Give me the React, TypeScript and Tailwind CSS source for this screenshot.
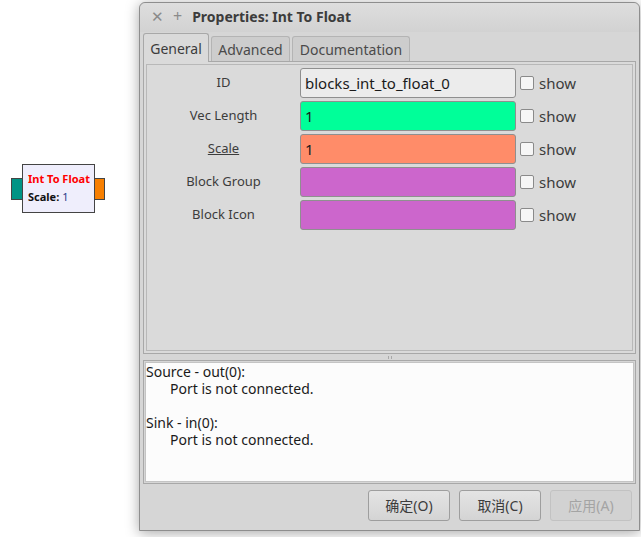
import React from 'react';

type Param = {
  label: string;
  value: string;
  bg: string;
  underline?: boolean;
};

const params: Param[] = [
  { label: 'ID', value: 'blocks_int_to_float_0', bg: 'bg-[#ececec]' },
  { label: 'Vec Length', value: '1', bg: 'bg-[#00ff99]' },
  { label: 'Scale', value: '1', bg: 'bg-[#ff8c69]', underline: true },
  { label: 'Block Group', value: '', bg: 'bg-[#cc66cc]' },
  { label: 'Block Icon', value: '', bg: 'bg-[#cc66cc]' },
];

const FlowBlock: React.FC = () => (
  <div className="absolute left-[11px] top-[164px] flex items-center">
    <div className="w-[11px] h-[22px] bg-[#009485] border border-[#444] border-r-0" />
    <div className="w-[73px] h-[49px] bg-[#efeefc] border border-[#444] pl-[5px] pt-[5px] text-[11px] leading-[18px] font-bold whitespace-nowrap">
      <div className="text-[#ff0000]">Int To Float</div>
      <div className="text-[#111]">
        Scale: <span className="font-normal text-[#1f3a8a]">1</span>
      </div>
    </div>
    <div className="w-[10px] h-[22px] bg-[#f77f00] border border-[#444] border-l-0" />
  </div>
);

const Tab: React.FC<{ label: string; active?: boolean; width: string }> = ({ label, active, width }) =>
  active ? (
    <div className={`${width} h-[29px] -mb-px z-10 rounded-t-[3px] border border-b-0 border-[#a8a8a8] bg-[#dadada] flex items-center justify-center text-[#3c3c3c]`}>
      {label}
    </div>
  ) : (
    <div className={`${width} h-[25px] rounded-t-[3px] border border-b-0 border-[#b4b4b4] bg-[#cdcdcd] flex items-center justify-center text-[#4a4a4a]`}>
      {label}
    </div>
  );

const ParamRow: React.FC<{ p: Param }> = ({ p }) => (
  <div className="flex items-center h-[30px]">
    <div className="w-[153px] text-center text-[13px] text-[#3c3c3c]">
      <span className={p.underline ? 'underline' : ''}>{p.label}</span>
    </div>
    <div className={`w-[216px] h-[30px] rounded-[3px] border border-[#8f8f8f] ${p.bg} px-[4px] flex items-center text-[15px] text-[#1a1a1a]`}>
      {p.value}
    </div>
    <div className="ml-[4px] w-[14px] h-[14px] rounded-[2px] border border-[#8a8a8a] bg-[#f6f6f6]" />
    <span className="ml-[5px] text-[15px] text-[#3c3c3c]">show</span>
  </div>
);

const Button: React.FC<{ label: string; disabled?: boolean }> = ({ label, disabled }) => (
  <div
    className={`w-[82px] h-[31px] rounded-[3px] border flex items-center justify-center text-[14px] ${
      disabled
        ? 'border-[#c2c2c2] bg-[#d2d2d2] text-[#a4a4a4]'
        : 'border-[#9e9e9e] bg-gradient-to-b from-[#e4e4e4] to-[#d4d4d4] text-[#3c3c3c]'
    }`}
  >
    {label}
  </div>
);

export default function App() {
  return (
    <div
      className="relative w-[641px] h-[537px] bg-white overflow-hidden"
      style={{ fontFamily: '"Noto Sans", "Noto Sans CJK SC", sans-serif' }}
    >
      <FlowBlock />

      <div className="absolute left-[139px] top-[2px] w-[501px] h-[529px] rounded-t-[6px] border border-[#8e8e8e] bg-[#d6d6d6] shadow-[0_2px_14px_rgba(0,0,0,0.35)] flex flex-col">
        {/* Title bar */}
        <div className="h-[29px] rounded-t-[6px] bg-gradient-to-b from-[#dedede] to-[#d2d2d2] flex items-center text-[14px] pb-[3px]">
          <span className="ml-[11px] text-[#8a8a8a] text-[15px]">✕</span>
          <span className="ml-[9px] text-[#8a8a8a] text-[16px]">+</span>
          <span className="ml-[10px] font-bold text-[#3c3c3c]">Properties: Int To Float</span>
        </div>

        {/* Tabs */}
        <div className="flex items-end gap-[2px] ml-[3px] mt-[1px] text-[14px]">
          <Tab label="General" active width="w-[66px]" />
          <Tab label="Advanced" width="w-[79px]" />
          <Tab label="Documentation" width="w-[118px]" />
        </div>

        {/* Notebook page */}
        <div className="mx-[3px] h-[293px] border border-[#a8a8a8] bg-[#dadada] p-[2px]">
          <div className="h-full border border-[#b8b8b8] flex flex-col gap-[3px] pt-[3px]">
            {params.map((p) => (
              <ParamRow key={p.label} p={p} />
            ))}
          </div>
        </div>

        {/* Pane handle */}
        <div className="h-[6px] flex items-center justify-center">
          <div className="w-[4px] h-[3px] border-x border-[#a8a8a8]" />
        </div>

        {/* Info text */}
        <div className="mx-[3px] h-[124px] border border-[#a8a8a8] p-[1px]">
          <div className="h-full bg-[#fcfcfc] border border-[#c4c4c4] px-0 text-[14px] leading-[17px] text-[#1a1a1a]">
            <div>Source - out(0):</div>
            <div className="pl-[24px]">Port is not connected.</div>
            <div className="h-[17px]" />
            <div>Sink - in(0):</div>
            <div className="pl-[24px]">Port is not connected.</div>
          </div>
        </div>

        {/* Buttons */}
        <div className="flex justify-end gap-[9px] mt-[6px] mr-[7px]">
          <Button label="确定(O)" />
          <Button label="取消(C)" />
          <Button label="应用(A)" disabled />
        </div>
      </div>
    </div>
  );
}
